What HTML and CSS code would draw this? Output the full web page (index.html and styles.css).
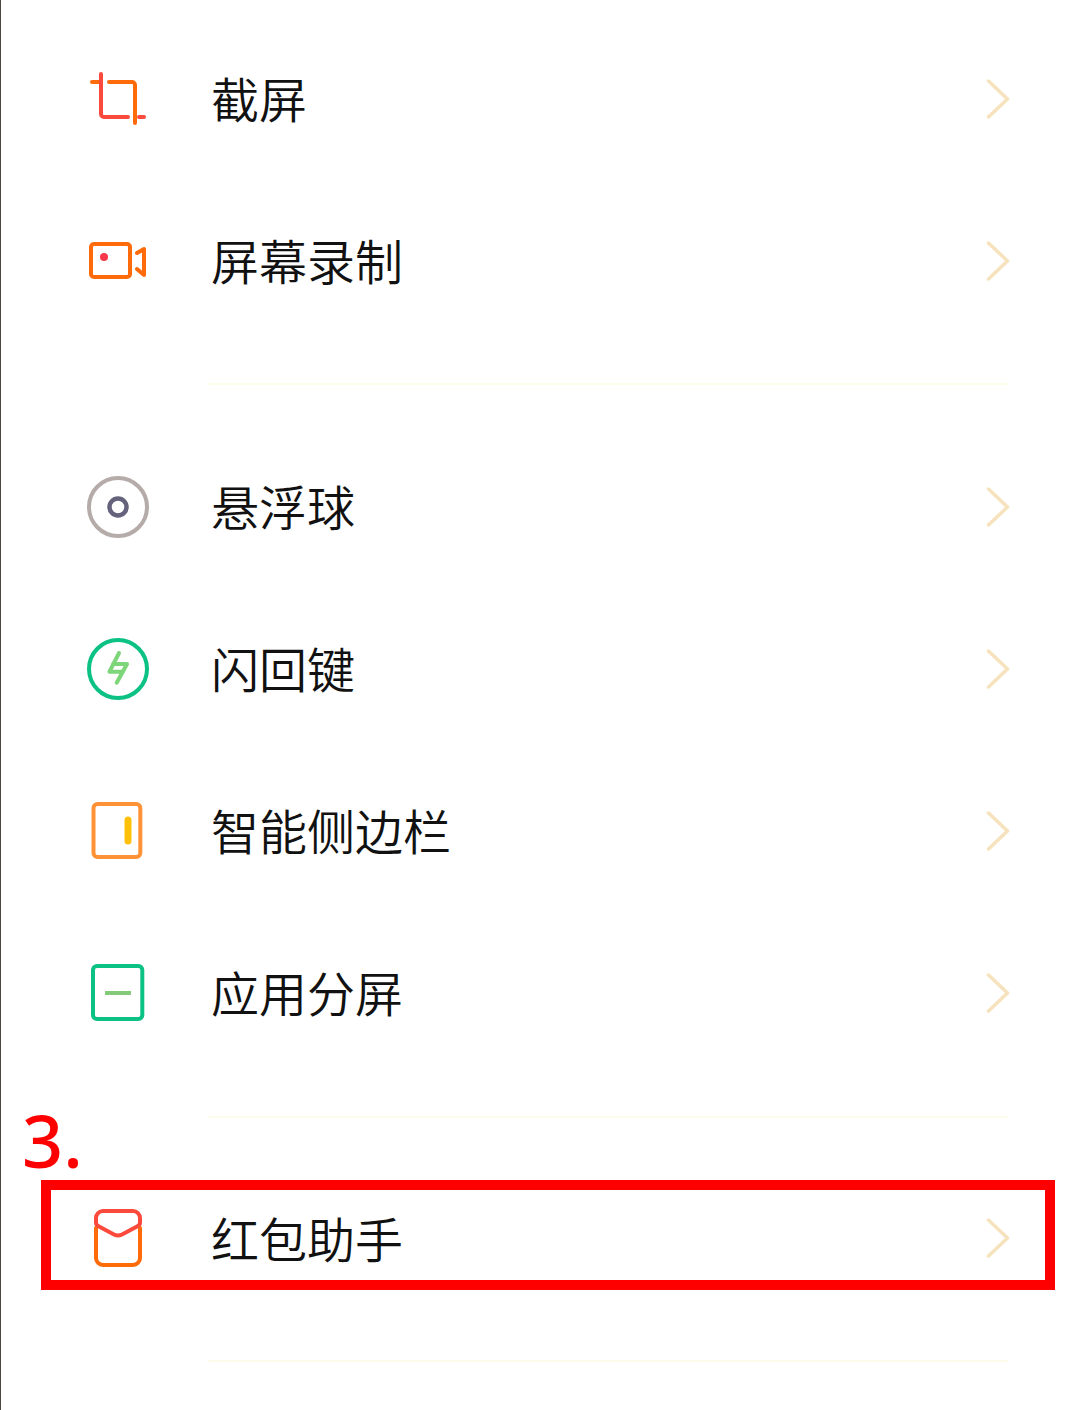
FILE: index.html
```html
<!DOCTYPE html>
<html lang="zh-CN">
<head>
<meta charset="utf-8">
<title>便捷工具</title>
<link rel="stylesheet" href="styles.css">
</head>
<body>
<main class="page">
  <section class="group">
    <div class="row">
      <svg class="icon" viewBox="0 0 60 60"><path d="M4 12H11M21 12H44a3 3 0 0 1 3 3V53" class="s-o"/><path d="M13 4V44a3 3 0 0 0 3 3H40M51 47H56" class="s-r"/></svg>
      <span class="label">截屏</span>
      <svg class="chev" viewBox="0 0 24 42"><path d="M2.500 2L21.500 20L2.500 38"/></svg>
    </div>
    <div class="row">
      <svg class="icon" viewBox="0 0 60 60"><rect x="3" y="12" width="39" height="33" rx="3" class="s-o"/><circle cx="16" cy="25" r="4" class="f-r"/><path d="M49 21L56 17V43L49 37" class="s-o"/></svg>
      <span class="label">屏幕录制</span>
      <svg class="chev" viewBox="0 0 24 42"><path d="M2.500 2L21.500 20L2.500 38"/></svg>
    </div>
  </section>
  <hr class="divider">
  <section class="group group-mid">
    <div class="row">
      <svg class="icon" viewBox="0 0 60 60"><circle cx="30" cy="30" r="29" class="s-grey"/><circle cx="30" cy="30" r="8.500" class="s-slate"/></svg>
      <span class="label">悬浮球</span>
      <svg class="chev" viewBox="0 0 24 42"><path d="M2.500 2L21.500 20L2.500 38"/></svg>
    </div>
    <div class="row">
      <svg class="icon" viewBox="0 0 60 60"><circle cx="30" cy="30" r="29" class="s-green"/><path d="M31 14L21.500 32.700H35M25 25H39L28.700 43.700" class="s-lime"/></svg>
      <span class="label">闪回键</span>
      <svg class="chev" viewBox="0 0 24 42"><path d="M2.500 2L21.500 20L2.500 38"/></svg>
    </div>
    <div class="row">
      <svg class="icon" viewBox="0 0 60 60"><rect x="5.500" y="3" width="46.800" height="53" rx="4" class="s-amber"/><path d="M40 19V40" class="s-yellow"/></svg>
      <span class="label">智能侧边栏</span>
      <svg class="chev" viewBox="0 0 24 42"><path d="M2.500 2L21.500 20L2.500 38"/></svg>
    </div>
    <div class="row">
      <svg class="icon" viewBox="0 0 60 60"><rect x="5" y="3" width="49.300" height="53" rx="4" class="s-green"/><path d="M17 30H43" class="s-bar"/></svg>
      <span class="label">应用分屏</span>
      <svg class="chev" viewBox="0 0 24 42"><path d="M2.500 2L21.500 20L2.500 38"/></svg>
    </div>
  </section>
  <hr class="divider divider-low">
  <section class="group group-last">
    <div class="row">
      <svg class="icon" viewBox="0 0 60 60"><path d="M8 19V49a7 7 0 0 0 7 7H45a7 7 0 0 0 7-7V19" class="s-o"/><path d="M8 14V9a7 7 0 0 1 7-7H45a7 7 0 0 1 7 7V14Q52 16 49 17.500L34 25.500Q30 27.500 26 25.500L11 17.500Q8 16 8 14Z" class="s-r"/></svg>
      <span class="label">红包助手</span>
      <svg class="chev" viewBox="0 0 24 42"><path d="M2.500 2L21.500 20L2.500 38"/></svg>
    </div>
  </section>
  <hr class="divider">
</main>
<div class="step">3.</div>
<div class="highlight"></div>
</body>
</html>
```
FILE: styles.css
```css
* { box-sizing: border-box; }
html, body { margin: 0; padding: 0; background: #fff; }
body { width: 1080px; height: 1410px; overflow: hidden; position: relative; }
.page {
  height: 1410px;
  padding-top: 19px;
  border-left: 1px solid #4a463c;
}
.row {
  height: 162px;
  display: flex;
  align-items: center;
  padding-left: 87px;
  padding-right: 70px;
}
.icon { width: 60px; height: 60px; flex: none; overflow: visible; fill: none; stroke-width: 4; stroke-linecap: round; stroke-linejoin: round; }
.label {
  margin-left: 63px;
  padding-bottom: 6px;
  flex: 1;
  font-family: "Noto Sans CJK SC", sans-serif;
  font-size: 48px;
  line-height: 60px;
  font-weight: 350;
  color: #111;
}
.group-mid .label, .group-last .label { padding-bottom: 4px; }
.chev { width: 24px; height: 42px; flex: none; fill: none; stroke: #f6e2bd; stroke-width: 3.500; stroke-linecap: round; stroke-linejoin: round; }
.group-mid .chev { margin-top: 2px; }
.divider {
  margin: 40px 72px 41px 207px;
  height: 2px;
  border: 0;
  background: #fdfbea;
}
.divider-low { margin-top: 42px; margin-bottom: 40px; }
.s-o { stroke: #ff6a0a; }
.s-r { stroke: #fb4a3c; }
.f-r { fill: #f8384a; }
.s-grey { stroke: #b5aba8; }
.s-slate { stroke: #65627c; stroke-width: 4.500; }
.s-green { stroke: #0bc184; }
.s-lime { stroke: #7ed67a; stroke-width: 4; }
.s-amber { stroke: #ff9236; }
.s-yellow { stroke: #ffc107; stroke-width: 7; }
.s-bar { stroke: #85c97a; stroke-linecap: butt; }
.step {
  position: absolute;
  left: 22px;
  top: 1098px;
  font-family: "Noto Sans", sans-serif;
  font-size: 72px;
  line-height: 84px;
  font-weight: 500;
  color: #ff0000;
}
.highlight {
  position: absolute;
  left: 41px;
  top: 1180px;
  width: 1014px;
  height: 110px;
  border: 10px solid #ff0000;
}
```
